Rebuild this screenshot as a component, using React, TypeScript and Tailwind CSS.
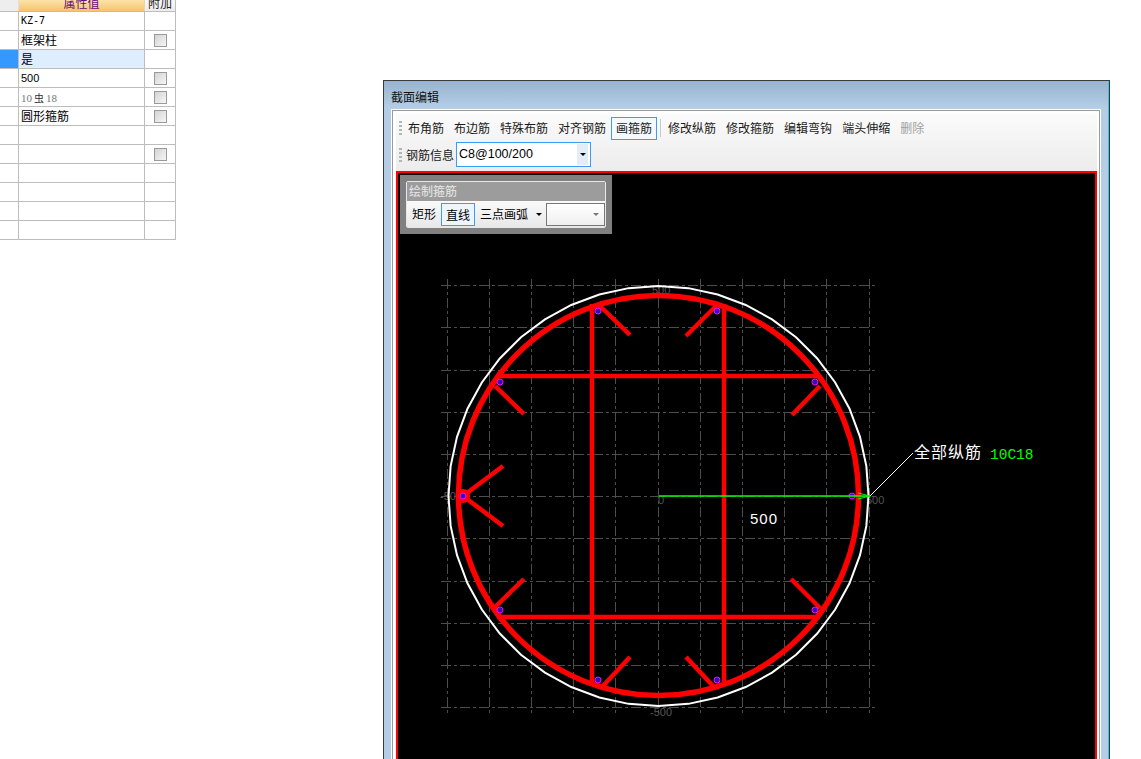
const rows = [
  { value: "KZ-7", check: false, mono: true },
  { value: "框架柱", check: true },
  { value: "是", check: false, active: true },
  { value: "500", check: true, latin: true },
  { value: "10虫18", check: true, rebar: true },
  { value: "圆形箍筋", check: true },
  { value: "", check: false },
  { value: "", check: true },
  { value: "", check: false },
  { value: "", check: false },
  { value: "", check: false },
  { value: "", check: false },
];

const toolbar = ["布角筋", "布边筋", "特殊布筋", "对齐钢筋", "画箍筋"];
const toolbar2 = ["修改纵筋", "修改箍筋", "编辑弯钩", "端头伸缩"];

const gridX = [447, 489, 531, 573, 615, 658, 700, 742, 784, 826, 869];
const gridY = [285, 327, 370, 412, 454, 496, 538, 581, 623, 665, 707];

const hooks = [
  [600, 306, 630, 335],
  [495, 386, 524, 414],
  [716, 306, 686, 336],
  [820, 386, 792, 415],
  [494, 608, 524, 579],
  [602, 687, 630, 657],
  [714, 687, 686, 657],
  [820, 608, 791, 579],
  [463, 496, 503, 466],
  [463, 496, 503, 526],
];

const bars = [
  [598, 311],
  [717, 311],
  [500, 382],
  [815, 382],
  [463, 496],
  [852, 496],
  [500, 610],
  [815, 610],
  [598, 680],
  [717, 680],
];

// the outer outline in the picture is visibly faceted
const outline = Array.from({ length: 44 }, (_, i) => {
  const a = (i / 44) * Math.PI * 2;
  return `${658.5 + 210 * Math.cos(a)},${496 + 210 * Math.sin(a)}`;
}).join(" ");

function Checkbox() {
  return (
    <div className="w-[13px] h-[13px] border border-[#9a9a9a] bg-gradient-to-br from-[#d4d4d4] to-[#f6f6f6]" />
  );
}

function PropertyTable() {
  return (
    <div className="w-[176px] shrink-0 self-start border-r border-[#bdbdbd] font-['Noto_Sans_CJK_SC',sans-serif] text-[12px] text-black">
      <div className="flex h-[12px] border-b border-[#bdbdbd] overflow-hidden">
        <div className="w-[19px] border-r border-[#e0e0e0] bg-[#eeeeee]" />
        <div className="w-[126px] border-r border-[#e8d5a8] bg-gradient-to-b from-[#fbe3a8] to-[#f3c56c] flex justify-center items-end">
          <span className="leading-[16px] text-[#6a0a80]">属性值</span>
        </div>
        <div className="flex-1 bg-gradient-to-b from-[#f8f8f8] to-[#ececec] flex justify-center items-end">
          <span className="leading-[16px] text-[#222222]">附加</span>
        </div>
      </div>
      {rows.map((row, i) => (
        <div key={i} className="flex h-[19px] border-b border-[#bdbdbd]">
          <div className={`w-[19px] border-r border-[#bdbdbd] ${row.active ? "bg-[#3399ff]" : "bg-white"}`} />
          <div
            className={`w-[126px] border-r border-[#bdbdbd] pl-[2px] leading-[18px] whitespace-nowrap ${row.active ? "bg-[#deeeff]" : ""} ${row.mono ? "font-['DejaVu_Sans_Mono',monospace] text-[10px]" : ""} ${row.latin ? "font-['Liberation_Sans',sans-serif] text-[11px]" : ""}`}
          >
            {row.rebar ? (
              <span className="font-['Liberation_Serif',serif] text-[11px] text-[#777777]">
                10<span className="mx-[2px] font-['Noto_Sans_CJK_SC',sans-serif] text-[10px] text-[#333333]">虫</span>18
              </span>
            ) : (
              row.value
            )}
          </div>
          <div className="flex-1 flex justify-center items-center">{row.check && <Checkbox />}</div>
        </div>
      ))}
    </div>
  );
}

function Gripper() {
  return (
    <div className="w-[3px] h-[14px] ml-[3px] mr-[1px] flex flex-col justify-between">
      <div className="h-[2px] bg-[#b4b4b4]" />
      <div className="h-[2px] bg-[#b4b4b4]" />
      <div className="h-[2px] bg-[#b4b4b4]" />
      <div className="h-[2px] bg-[#b4b4b4]" />
    </div>
  );
}

function ToolButton({ label, active }: { label: string; active?: boolean }) {
  return (
    <div
      className={`px-[4px] h-[23px] leading-[20px] border whitespace-nowrap ${active ? "border-[#3c9cf0] bg-[#f4f9fe]" : "border-transparent"}`}
    >
      {label}
    </div>
  );
}

function SectionCanvas() {
  return (
    <svg viewBox="398 173 697 586" className="block w-[697px] h-[586px]">
      <g stroke="#4d4d4d" strokeWidth="1" strokeDasharray="10 3 3 3" shapeRendering="crispEdges">
        {gridX.map((x) => (
          <line key={x} x1={x + 0.5} y1="279" x2={x + 0.5} y2="714" />
        ))}
        {gridY.map((y) => (
          <line key={y} x1="441" y1={y + 0.5} x2="877" y2={y + 0.5} />
        ))}
      </g>

      <g fill="#555555" fontSize="11" fontFamily="'Liberation Sans', sans-serif">
        <text x="652" y="294">500</text>
        <text x="650" y="716">-500</text>
        <text x="440" y="500">-500</text>
        <text x="658" y="504">0</text>
        <text x="866" y="504">500</text>
      </g>

      <polygon points={outline} fill="none" stroke="#ffffff" strokeWidth="2" />
      <circle cx="658.5" cy="495.5" r="200" fill="none" stroke="#ff0000" strokeWidth="5.5" />

      <g stroke="#ff0000" strokeWidth="4.5" strokeLinecap="butt">
        <line x1="592" y1="304" x2="592" y2="682" />
        <line x1="724" y1="304" x2="724" y2="684" />
        <line x1="497" y1="376" x2="820" y2="376" />
        <line x1="497" y1="617" x2="820" y2="617" />
        {hooks.map((h, i) => (
          <line key={i} x1={h[0]} y1={h[1]} x2={h[2]} y2={h[3]} />
        ))}
      </g>
      <circle cx="463" cy="496" r="7" fill="#ff0000" />

      {bars.map((b, i) => (
        <circle key={i} cx={b[0]} cy={b[1]} r="3" fill="#3010b0" stroke="#ff00ff" strokeWidth="1" />
      ))}

      <line x1="659" y1="496" x2="870" y2="496" stroke="#00ff00" strokeWidth="1.5" />
      <path d="M858 493 L870 496 L858 499" fill="none" stroke="#00ff00" strokeWidth="1" />
      <line x1="870" y1="496" x2="913" y2="453" stroke="#ffffff" strokeWidth="1" />

      <text x="750" y="524" fill="#ffffff" fontSize="15" letterSpacing="1" fontFamily="'Liberation Sans', sans-serif">500</text>
      <text x="914" y="458" fill="#ffffff" fontSize="16" letterSpacing="1" fontFamily="'Noto Sans CJK SC', sans-serif">全部纵筋</text>
      <text x="990" y="459" fill="#00ff00" fontSize="14.5" fontFamily="'Liberation Mono', monospace">10C18</text>
    </svg>
  );
}

function DrawPanel() {
  return (
    <div className="absolute left-[2px] top-[2px] w-[212px] h-[59px] bg-[#808080] p-[6px]">
      <div className="h-[47px] border border-[#e8e8e8] rounded-[2px] overflow-hidden">
        <div className="h-[19px] bg-[#9c9c9c] text-[#e8e8e8] pl-[2px] leading-[18px]">绘制箍筋</div>
        <div className="h-[26px] bg-gradient-to-b from-[#fafafa] to-[#e8e8e8] flex items-center text-black">
          <div className="px-[4px] border border-transparent">矩形</div>
          <div className="px-[4px] h-[23px] leading-[21px] border border-[#3c9cf0] bg-[#eef6fd]">直线</div>
          <div className="pl-[5px] whitespace-nowrap">三点画弧</div>
          <div className="ml-[8px] w-0 h-0 border-x-[3px] border-x-transparent border-t-[3px] border-t-black" />
          <div className="ml-[4px] w-[59px] h-[23px] border border-[#777777] bg-gradient-to-b from-white to-[#efefef] flex items-center justify-end pr-[5px]">
            <div className="w-0 h-0 border-x-[3px] border-x-transparent border-t-[3px] border-t-[#777777]" />
          </div>
        </div>
      </div>
    </div>
  );
}

function EditorWindow() {
  return (
    <div className="ml-[207px] mt-[80px] w-[727px] h-[679px] shrink-0 border border-b-0 border-[#3a3a3a] bg-[#b4cde6] shadow-[inset_-1px_0_0_#3fc1e6] pl-[8px] pr-[9px] flex flex-col font-['Noto_Sans_CJK_SC',sans-serif] text-[12px] text-[#1a1a1a]">
      <div className="-ml-[8px] -mr-[8px] h-[28px] shrink-0 bg-gradient-to-b from-[#98b3cd] to-[#b5cfe9] pl-[7px] leading-[32px] text-[#111111]">
        截面编辑
      </div>
      <div className="flex-1 border border-[#9a9a9a] border-b-0 bg-white shadow-[0_0_0_1px_#ffffff] mt-[1px] pl-[3px] pr-[2px] pt-[3px] flex flex-col min-h-0">
        <div className="h-[57px] shrink-0 bg-gradient-to-b from-[#fbfbfb] to-[#ececec] flex flex-col">
          <div className="flex items-center h-[28px]">
            <Gripper />
            {toolbar.map((t) => (
              <ToolButton key={t} label={t} active={t === "画箍筋"} />
            ))}
            <div className="w-[1px] h-[18px] bg-[#c8c8c8] ml-[3px] mr-[2px]" />
            {toolbar2.map((t) => (
              <ToolButton key={t} label={t} />
            ))}
            <div className="px-[5px] text-[#a0a0a0]">删除</div>
          </div>
          <div className="flex items-center h-[25px]">
            <Gripper />
            <div className="pl-[3px] pr-[2px]">钢筋信息</div>
            <div className="w-[135px] h-[25px] border border-[#3c9cf0] bg-white flex items-center pl-[2px] text-[12.5px] font-['Liberation_Sans',sans-serif] text-black">
              <span className="flex-1">C8@100/200</span>
              <div className="w-[11px] h-[21px] mr-[2px] bg-[#e2edf8] flex items-center justify-center">
                <div className="w-0 h-0 border-x-[3px] border-x-transparent border-t-[3px] border-t-black" />
              </div>
            </div>
          </div>
        </div>
        <div className="relative flex-1 min-h-0 border-2 border-b-0 border-[#ff0000] bg-black overflow-hidden">
          <SectionCanvas />
          <DrawPanel />
        </div>
      </div>
    </div>
  );
}

export default function App() {
  return (
    <div className="flex w-[1141px] h-[759px] overflow-hidden bg-white">
      <PropertyTable />
      <EditorWindow />
    </div>
  );
}
